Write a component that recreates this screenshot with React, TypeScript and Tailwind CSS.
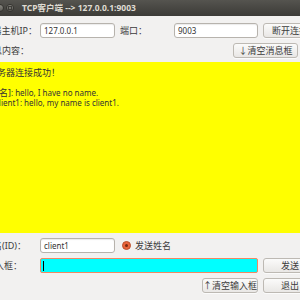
import React from "react";

const font = { fontFamily: '"Noto Sans", "Noto Sans CJK SC", sans-serif' };

function Btn({ children, className = "" }: { children: React.ReactNode; className?: string }) {
  return (
    <div
      className={
        "h-[15px] shrink-0 flex items-center justify-center rounded-[3px] border border-[#bdb9b3] bg-gradient-to-b from-[#fbfbfa] to-[#e9e7e5] text-[9px] text-[#3c3c3c] whitespace-nowrap shadow-[0_1px_0_rgba(255,255,255,0.7)] " +
        className
      }
    >
      {children}
    </div>
  );
}

function Input({ value, className = "" }: { value: string; className?: string }) {
  return (
    <div
      className={
        "h-[15px] shrink-0 flex items-center rounded-[3px] border border-[#b7b3ad] bg-white pl-[3px] text-[8px] text-[#333] shadow-[inset_0_1px_1px_rgba(0,0,0,0.08)] " +
        className
      }
    >
      {value}
    </div>
  );
}

function Label({ text, w }: { text: string; w: string }) {
  return (
    <div className={"shrink-0 flex justify-end whitespace-nowrap text-[9px] text-[#3c3c3c] " + w}>
      <span>{text}</span>
    </div>
  );
}

export default function App() {
  return (
    <div className="w-[300px] h-[300px] overflow-hidden bg-[#f2f1f0] flex flex-col" style={font}>
      {/* Title bar */}
      <div className="h-[16px] shrink-0 flex items-center bg-gradient-to-b from-[#55544f] to-[#3c3b37] relative">
        <div className="absolute left-[-4px] top-[4px] w-[8px] h-[8px] rounded-full bg-gradient-to-b from-[#8a8983] to-[#5d5c57] border border-[#34332f]" />
        <div className="absolute left-[6px] top-[4px] w-[8px] h-[8px] rounded-full bg-gradient-to-b from-[#8a8983] to-[#5d5c57] border border-[#34332f] flex items-center justify-center">
          <div className="w-[4px] h-[4px] border border-[#3e3d39]" />
        </div>
        <div className="ml-[22px] text-[8.5px] font-bold text-[#dfdbd2] whitespace-nowrap">
          TCP客户端 --&gt; 127.0.0.1:9003
        </div>
      </div>

      {/* Row 1 */}
      <div className="mt-[7px] h-[15px] flex items-center shrink-0">
        <Label text="服务器主机IP：" w="w-[37px]" />
        <Input value="127.0.0.1" className="ml-[3px] w-[75px]" />
        <div className="ml-[5px] w-[54px] shrink-0 text-[9px] text-[#3c3c3c] whitespace-nowrap">端口：</div>
        <Input value="9003" className="w-[84px]" />
        <Btn className="ml-[5px] w-[54px]">断开连接</Btn>
      </div>

      {/* Row 2 */}
      <div className="mt-[5px] h-[15px] flex items-center shrink-0">
        <Label text="消息内容：" w="w-[29px]" />
        <div className="flex-1" />
        <Btn className="w-[65px] mr-[2px]">↓清空消息框</Btn>
      </div>

      {/* Message area */}
      <div className="mt-[4px] h-[171px] shrink-0 bg-[#ffff00] pt-[6px] text-[8px] leading-[10px] text-[#333] whitespace-nowrap">
        <div className="ml-[-12px] text-[9px]">服务器连接成功！</div>
        <div className="h-[10px]" />
        <div className="ml-[-13px]">
          <span className="text-[9px]">[无名]</span>: hello, I have no name.
        </div>
        <div className="ml-[-5px]">client1: hello, my name is client1.</div>
      </div>

      {/* Name row */}
      <div className="mt-[5px] h-[15px] flex items-center shrink-0">
        <Label text="姓名(ID)：" w="w-[26px]" />
        <Input value="client1" className="ml-[14px] w-[75px]" />
        <div className="ml-[7px] w-[9px] h-[9px] rounded-full bg-[#e9643a] border border-[#b8512f] flex items-center justify-center shrink-0">
          <div className="w-[3px] h-[3px] rounded-full bg-[#7a2a10]" />
        </div>
        <div className="ml-[4px] text-[9px] text-[#3c3c3c] whitespace-nowrap">发送姓名</div>
      </div>

      {/* Input row */}
      <div className="mt-[5px] h-[15px] flex items-center shrink-0">
        <Label text="输入框：" w="w-[22px]" />
        <div className="ml-[18px] w-[218px] h-[15px] shrink-0 rounded-[2px] border border-[#f08a62] bg-[#00ffff] flex items-center pl-[2px]">
          <div className="w-[1px] h-[10px] bg-black" />
        </div>
        <Btn className="ml-[5px] w-[54px]">发送</Btn>
      </div>

      {/* Bottom row */}
      <div className="mt-[5px] h-[15px] flex items-center shrink-0">
        <Btn className="ml-[202px] w-[56px]">↑清空输入框</Btn>
        <Btn className="ml-[5px] w-[54px]">退出</Btn>
      </div>
    </div>
  );
}
